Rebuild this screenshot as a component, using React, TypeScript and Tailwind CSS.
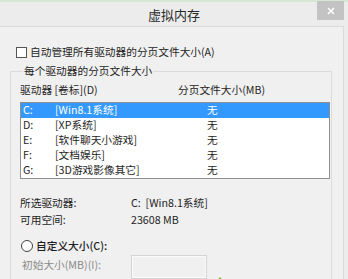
const drives = [
  { letter: "C:", label: "[Win8.1系统]", size: "无", selected: true },
  { letter: "D:", label: "[XP系统]", size: "无" },
  { letter: "E:", label: "[软件聊天小游戏]", size: "无" },
  { letter: "F:", label: "[文档娱乐]", size: "无" },
  { letter: "G:", label: "[3D游戏影像其它]", size: "无" },
];

export default function App() {
  return (
    <div className="flex h-[279px] w-[348px] flex-col overflow-hidden bg-[#ececec] text-[10.7px] text-[#1e1e1e] [font-family:'Noto_Sans_CJK_SC','Noto_Sans',sans-serif]">
      {/* title bar */}
      <div className="relative flex h-[26px] shrink-0 items-center justify-center border-t-2 border-[#d6e8d6]">
        <span className="text-[13px] leading-none text-[#2a2a2a]">虚拟内存</span>
        <div className="absolute right-[4px] top-[-1px] flex h-[19px] w-[27px] items-center justify-center bg-[#c3c3c3]">
          <svg width="8" height="8" viewBox="0 0 8 8">
            <path d="M1 1L7 7M7 1L1 7" stroke="#ffffff" strokeWidth="1.6" />
          </svg>
        </div>
      </div>

      {/* dialog body */}
      <div className="flex w-[344px] flex-1 flex-col border-r border-t border-[#dadada] bg-[#f0f0f0]">
        <label className="ml-[16px] mt-[18px] flex h-[14px] items-center gap-[3px] leading-none">
          <span className="h-[11px] w-[11px] border border-[#555] bg-white" />
          <span>自动管理所有驱动器的分页文件大小(A)</span>
        </label>

        <fieldset className="ml-[10px] mt-[5px] w-[322px] flex-1 border border-[#dcdcdc] pb-0 pl-[9px] pr-[1px] pt-[5px]">
          <legend className="ml-[3px] h-[14px] px-[1px] leading-[14px]">每个驱动器的分页文件大小</legend>

          <div className="flex h-[14px] items-center leading-none">
            <span className="w-[158px]">驱动器 [卷标](D)</span>
            <span>分页文件大小(MB)</span>
          </div>

          <div className="mt-[5px] border border-[#8f9091] bg-white">
            {drives.map((d) => (
              <div
                key={d.letter}
                className={`flex h-[15px] items-center leading-none ${
                  d.selected ? "bg-[#3399ff] text-white" : ""
                }`}
              >
                <span className="w-[34px] pl-[2px]">{d.letter}</span>
                <span className="w-[152px]">{d.label}</span>
                <span>{d.size}</span>
              </div>
            ))}
          </div>

          <div className="mt-[16px] flex h-[17px] items-center leading-none">
            <span className="w-[111px]">所选驱动器:</span>
            <span>C:&nbsp;&nbsp;[Win8.1系统]</span>
          </div>
          <div className="flex h-[17px] items-center leading-none">
            <span className="w-[111px]">可用空间:</span>
            <span>23608 MB</span>
          </div>

          <label className="mt-[10px] flex h-[14px] items-center gap-[3px] pl-[1px] leading-none">
            <span className="h-[12px] w-[12px] rounded-full border border-[#444] bg-white" />
            <span className="font-medium">自定义大小(C):</span>
          </label>

          <div className="relative mt-[2px] flex items-start">
            <span className="mt-[5px] w-[111px] pl-[2px] leading-none text-[#8a8a8a]">初始大小(MB)(I):</span>
            <div className="h-[24px] w-[76px] border border-[#d4d4d4] shadow-[inset_0_0_0_1px_#fafafa]" />
            <svg className="ml-[9px] mt-[22px]" width="8" height="6" viewBox="0 0 8 6">
              <path d="M4 0L8 5H0Z" fill="#6cbf2c" />
            </svg>
          </div>
        </fieldset>
      </div>
    </div>
  );
}
